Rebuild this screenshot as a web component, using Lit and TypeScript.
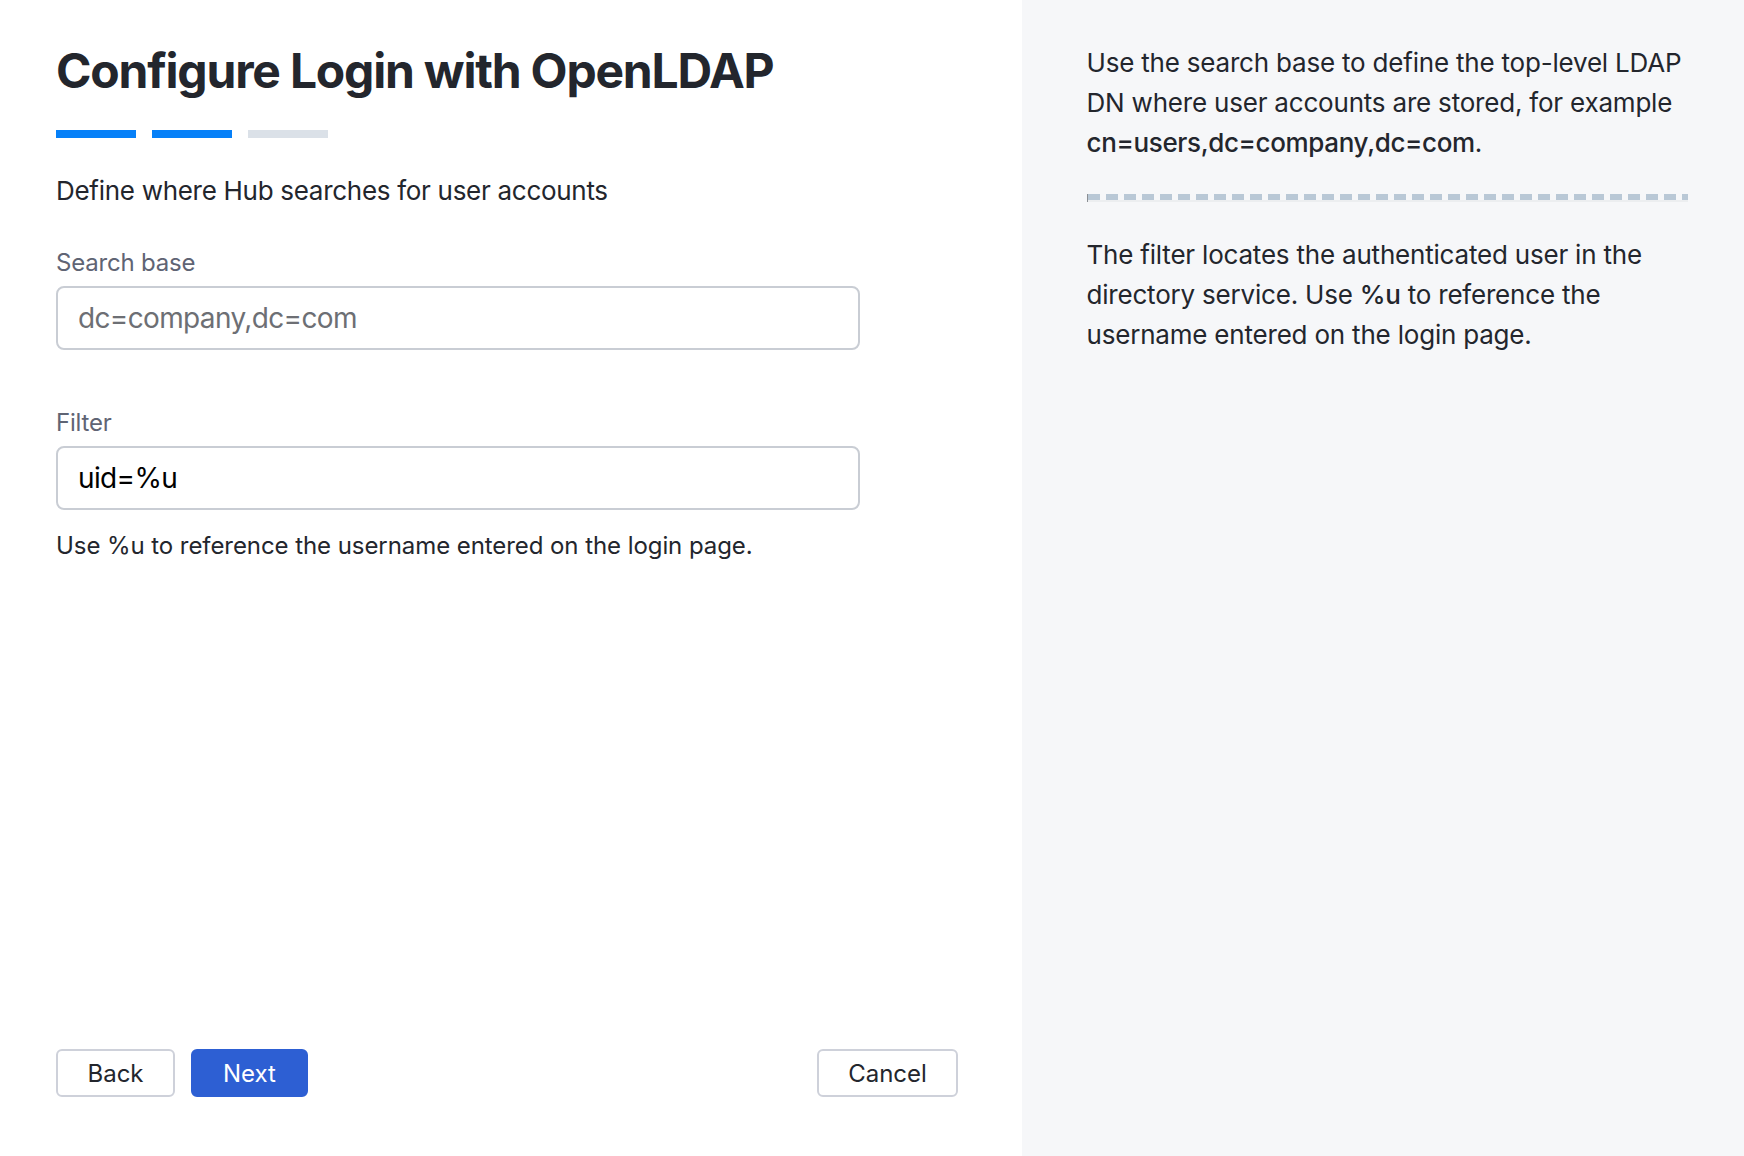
import { LitElement, html, css } from "lit";
import { customElement } from "lit/decorators.js";

@customElement("app-root")
export class AppRoot extends LitElement {
  static styles = css`
    :host { display: block; font-family: Inter, "Liberation Sans", sans-serif; color: #23262d; }
    * { box-sizing: border-box; }
    .page { display: grid; grid-template-columns: 1022px 1fr; height: 1156px; background: #fff; }
    .main { display: flex; flex-direction: column; padding: 37px 64px 59px 56px; }
    h1 { margin: 0; font-size: 48px; line-height: 68px; font-weight: 700; letter-spacing: -1.2px; color: #23262d; }
    .steps { display: flex; gap: 16px; margin-top: 25px; }
    .step { width: 80px; height: 8px; background: #dbe1e8; }
    .step.on { background: #0680f8; }
    .lead { margin: 33px 0 0; font-size: 26px; line-height: 40px; letter-spacing: -0.29px; }
    .field { display: flex; flex-direction: column; width: 804px; }
    .f1 { margin-top: 34px; }
    .f2 { margin-top: 55px; }
    label { font-size: 24px; line-height: 36px; color: #5f6474; margin-bottom: 5px; letter-spacing: -0.2px; }
    input { height: 64px; width: 100%; border: 2px solid #c9cdd4; border-radius: 8px; padding: 0 20px; font: inherit; font-size: 28px; letter-spacing: -0.65px; color: #000; background: #fff; outline: none; }
    input::placeholder { color: #6d6f74; opacity: 1; }
    .hint { margin: 18px 0 0; font-size: 24px; line-height: 36px; letter-spacing: -0.07px; }
    .actions { margin-top: auto; display: flex; gap: 16px; }
    button { height: 48px; border-radius: 6px; border: 2px solid #ced1da; background: #fff; font: inherit; font-size: 24px; color: #23262d; padding: 0; }
    .back { width: 119px; }
    .next { width: 117px; background: #2d5fd3; border-color: #2d5fd3; color: #fff; }
    .cancel { width: 141px; margin-left: auto; }
    aside { background: #f6f7f9; padding: 43px 56px 0 64.5px; font-size: 26px; line-height: 40px; letter-spacing: -0.2px; }
    aside p { margin: 0; }
    strong { font-weight: 500; letter-spacing: -0.35px; }
    .rule { height: 8px; margin: 31px 0 33px; border-left: 1px solid #8b8f94;
      background:
        repeating-linear-gradient(90deg, #b9c8d6 0 12px, transparent 12px 18px) top / 100% 6px no-repeat,
        linear-gradient(#eceef0, #eceef0) bottom / 100% 2px no-repeat; }
  `;

  render() {
    return html`
      <div class="page">
        <section class="main">
          <h1>Configure Login with OpenLDAP</h1>
          <div class="steps">
            <div class="step on"></div>
            <div class="step on"></div>
            <div class="step"></div>
          </div>
          <p class="lead">Define where Hub searches for user accounts</p>
          <div class="field f1">
            <label>Search base</label>
            <input placeholder="dc=company,dc=com" />
          </div>
          <div class="field f2">
            <label>Filter</label>
            <input value="uid=%u" />
          </div>
          <p class="hint">Use %u to reference the username entered on the login page.</p>
          <div class="actions">
            <button class="back">Back</button>
            <button class="next">Next</button>
            <button class="cancel">Cancel</button>
          </div>
        </section>
        <aside>
          <p>Use the search base to define the top-level LDAP DN where user accounts are stored, for example <strong>cn=users,dc=company,dc=com</strong>.</p>
          <div class="rule"></div>
          <p>The filter locates the authenticated user in the directory service. Use <strong>%u</strong> to reference the username entered on the login page.</p>
        </aside>
      </div>
    `;
  }
}
